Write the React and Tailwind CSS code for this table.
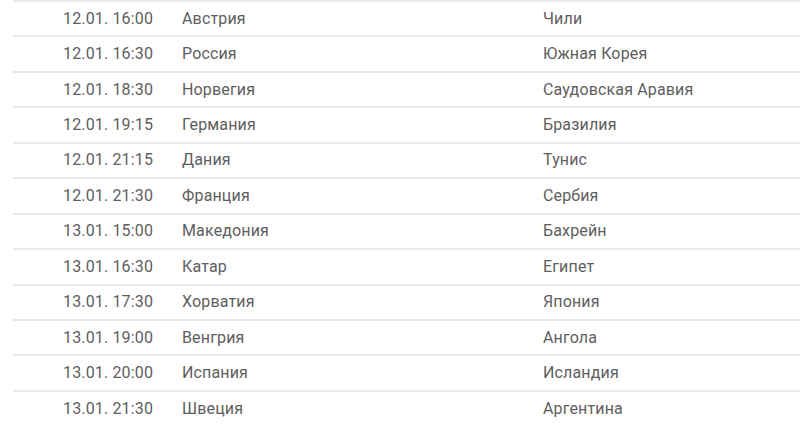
import React from 'react';

const matches = [
    ['12.01. 16:00', 'Австрия', 'Чили'],
    ['12.01. 16:30', 'Россия', 'Южная Корея'],
    ['12.01. 18:30', 'Норвегия', 'Саудовская Аравия'],
    ['12.01. 19:15', 'Германия', 'Бразилия'],
    ['12.01. 21:15', 'Дания', 'Тунис'],
    ['12.01. 21:30', 'Франция', 'Сербия'],
    ['13.01. 15:00', 'Македония', 'Бахрейн'],
    ['13.01. 16:30', 'Катар', 'Египет'],
    ['13.01. 17:30', 'Хорватия', 'Япония'],
    ['13.01. 19:00', 'Венгрия', 'Ангола'],
    ['13.01. 20:00', 'Испания', 'Исландия'],
    ['13.01. 21:30', 'Швеция', 'Аргентина'],
];

export default function App() {
    return (
        <div className="w-[800px] h-[425px] overflow-hidden bg-white pl-[13px]" style={{ fontFamily: 'Roboto, "Noto Sans", sans-serif' }}>
            {matches.map(([time, home, away], idx) => (
                <div
                    key={idx}
                    className="flex items-center h-[35.45px] border-t-2 border-[#e8e8e8] text-[16px] tracking-[0.15px] text-[#5e5e5e]"
                >
                    <div className="w-[169px] pl-[50px] whitespace-nowrap">{time}</div>
                    <div className="w-[361px]">{home}</div>
                    <div>{away}</div>
                </div>
            ))}
        </div>
    );
}
